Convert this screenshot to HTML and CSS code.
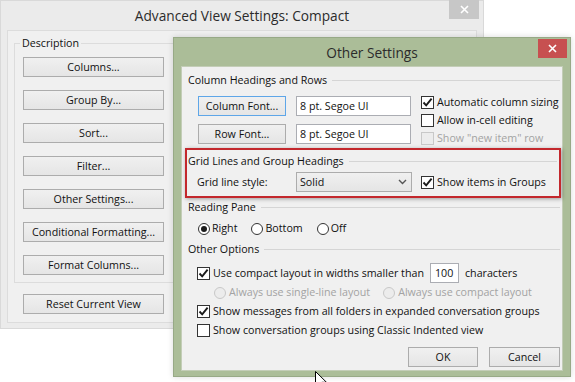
FILE: index.html
```html
<!DOCTYPE html>
<html lang="en">
<head>
    <meta charset="UTF-8">
    <meta name="viewport" content="width=device-width, initial-scale=1.0">
    <title>Advanced View Settings: Compact</title>
    <link rel="stylesheet" href="styles.css">
</head>
<body>
<div class="desktop">
    <!-- back window -->
    <div class="back-window">
        <div class="titlebar">
            <span></span>
            <span class="title">Advanced View Settings: Compact</span>
            <span class="close close-grey">
                <svg width="9" height="9" viewBox="0 0 9 9"><path d="M1 1L8 8M8 1L1 8" stroke="#fff" stroke-width="1.6"/></svg>
            </span>
        </div>
        <div class="client">
            <fieldset class="description">
                <legend>Description</legend>
                <button class="btn wide">Columns...</button>
                <button class="btn wide">Group By...</button>
                <button class="btn wide">Sort...</button>
                <button class="btn wide">Filter...</button>
                <button class="btn wide">Other Settings...</button>
                <button class="btn wide">Conditional Formatting...</button>
                <button class="btn wide">Format Columns...</button>
            </fieldset>
            <button class="btn wide reset">Reset Current View</button>
        </div>
    </div>

    <!-- Other Settings dialog -->
    <div class="dialog">
        <div class="titlebar dialog-titlebar">
            <span></span>
            <span class="title">Other Settings</span>
            <span class="close close-red">
                <svg width="9" height="9" viewBox="0 0 9 9"><path d="M1 1L8 8M8 1L1 8" stroke="#fff" stroke-width="1.6"/></svg>
            </span>
        </div>
        <div class="dialog-body">
            <div class="section-head">Column Headings and Rows</div>
            <div class="fonts-row">
                <div class="font-grid">
                    <button class="btn default">Column Font...</button>
                    <input class="field" type="text" value="8 pt. Segoe UI">
                    <button class="btn">Row Font...</button>
                    <input class="field" type="text" value="8 pt. Segoe UI">
                </div>
                <div class="check-list">
                    <label class="opt"><span class="box"><svg width="11" height="11" viewBox="0 0 11 11"><path d="M1.5 5.5L4.2 8.3L9.6 1.6" fill="none" stroke="#1a1a1a" stroke-width="1.9"/></svg></span>Automatic column sizing</label>
                    <label class="opt"><span class="box"></span>Allow in-cell editing</label>
                    <label class="opt disabled"><span class="box"></span>Show "new item" row</label>
                </div>
            </div>

            <div class="highlight">
                <div class="section-head">Grid Lines and Group Headings</div>
                <div class="grid-row">
                    <span class="grid-label">Grid line style:</span>
                    <div class="dropdown">
                        <span>Solid</span>
                        <svg width="9" height="6" viewBox="0 0 9 6"><path d="M1 1L4.5 4.5L8 1" fill="none" stroke="#555" stroke-width="1.4"/></svg>
                    </div>
                    <label class="opt"><span class="box"><svg width="11" height="11" viewBox="0 0 11 11"><path d="M1.5 5.5L4.2 8.3L9.6 1.6" fill="none" stroke="#1a1a1a" stroke-width="1.9"/></svg></span>Show items in Groups</label>
                </div>
            </div>

            <div class="section-head reading">Reading Pane</div>
            <div class="radio-row">
                <label class="opt"><span class="radio on"></span>Right</label>
                <label class="opt"><span class="radio"></span>Bottom</label>
                <label class="opt"><span class="radio"></span>Off</label>
            </div>

            <div class="section-head other">Other Options</div>
            <div class="options">
                <div class="opt-line tall">
                    <label class="opt"><span class="box"><svg width="11" height="11" viewBox="0 0 11 11"><path d="M1.5 5.5L4.2 8.3L9.6 1.6" fill="none" stroke="#1a1a1a" stroke-width="1.9"/></svg></span>Use compact layout in widths smaller than</label>
                    <input class="field chars" type="text" value="100">
                    <span class="unit">characters</span>
                </div>
                <div class="opt-line sub disabled">
                    <label class="opt"><span class="radio"></span>Always use single-line layout</label>
                    <label class="opt"><span class="radio"></span>Always use compact layout</label>
                </div>
                <div class="opt-line">
                    <label class="opt"><span class="box"><svg width="11" height="11" viewBox="0 0 11 11"><path d="M1.5 5.5L4.2 8.3L9.6 1.6" fill="none" stroke="#1a1a1a" stroke-width="1.9"/></svg></span>Show messages from all folders in expanded conversation groups</label>
                </div>
                <div class="opt-line">
                    <label class="opt"><span class="box"></span>Show conversation groups using Classic Indented view</label>
                </div>
            </div>

            <div class="actions">
                <button class="btn action">OK</button>
                <button class="btn action">Cancel</button>
            </div>
        </div>
    </div>

    <svg class="cursor" width="13" height="19" viewBox="0 0 13 19">
        <path d="M0.5 0.5V16L4.5 12.2L7.2 18L9.5 17L6.8 11.3H11.5Z" fill="#fff" stroke="#000"/>
    </svg>
</div>
</body>
</html>
```

FILE: styles.css
```css
/* base */
body {
    margin: 0;
    background: #fff;
    font-family: "Open Sans", "Segoe UI", sans-serif;
    font-size: 10.7px;
    line-height: 15px;
    color: #111;
}

.desktop {
    position: relative;
    width: 575px;
    height: 382px;
    overflow: hidden;
}

/* window chrome */
.titlebar {
    display: grid;
    grid-template-columns: 1fr auto 1fr;
    align-items: center;
    height: 29px;
}

.title {
    font-size: 13.7px;
    color: #2b2b2b;
    white-space: nowrap;
}

.close {
    justify-self: end;
    align-self: start;
    display: flex;
    align-items: center;
    justify-content: center;
}

.close-grey {
    width: 30px;
    height: 19px;
    margin: -1px 4px 0 0;
    background: #c7c7c7;
}

.close-red {
    width: 29px;
    height: 19px;
    margin: 1px 3px 0 0;
    background: #c75050;
}

/* back window */
.back-window {
    width: 484px;
    height: 329px;
    box-sizing: border-box;
    border: 1px solid #d9d9d9;
    background: #ebebeb;
}

.client {
    margin: 0 6px;
    height: 293px;
    box-sizing: border-box;
    border: 1px solid #dcdcdc;
    background: #f0f0f0;
}

.description {
    display: flex;
    flex-direction: column;
    gap: 13px;
    margin: 5px 6px 0 6px;
    padding: 6px 8px 7px;
    border: 1px solid #dcdcdc;
}

.description legend {
    margin-left: -3px;
    padding: 0 2px;
}

/* buttons */
.btn {
    font: inherit;
    color: #111;
    height: 20px;
    padding: 0;
    box-sizing: border-box;
    border: 1px solid #acacac;
    background: linear-gradient(#f0f0f0, #e5e5e5);
}

.btn.default {
    border-color: #5ea6e8;
}

.wide {
    width: 141px;
}

.reset {
    margin: 11px 0 0 15px;
}

/* Other Settings dialog */
.dialog {
    position: absolute;
    left: 173px;
    top: 37px;
    width: 398px;
    height: 340px;
    box-sizing: border-box;
    border: 1px solid #97a986;
    background: #abbd98;
    box-shadow: 0 0 6px rgba(0, 0, 0, 0.15);
}

.dialog-titlebar {
    height: 28px;
}

.dialog-body {
    margin: 0 7px;
    height: 305px;
    box-sizing: border-box;
    border: 1px solid #c3cdb7;
    background: #f0f0f0;
    padding: 6px 2px 0 6px;
}

.section-head {
    display: flex;
    align-items: center;
    white-space: nowrap;
}

.section-head::after {
    content: "";
    flex: 1;
    margin-left: 5px;
    border-top: 1px solid #d5d5d5;
}

.fonts-row {
    display: flex;
    margin-top: 8px;
    padding-left: 10px;
}

.font-grid {
    display: grid;
    grid-template-columns: 88px 115px;
    grid-auto-rows: 20px;
    column-gap: 10px;
    row-gap: 8px;
}

.field {
    font: inherit;
    color: #111;
    height: 20px;
    box-sizing: border-box;
    border: 1px solid #abadb3;
    background: #fff;
    padding: 0 0 0 3px;
    margin: 0;
}

.check-list {
    margin: -3px 0 0 10px;
}

/* check boxes and radios */
.opt {
    display: flex;
    align-items: center;
    gap: 3px;
    height: 18px;
    white-space: nowrap;
}

.box {
    width: 13px;
    height: 13px;
    box-sizing: border-box;
    border: 1px solid #333;
    background: #fff;
    display: flex;
    align-items: center;
    justify-content: center;
    flex-shrink: 0;
}

.radio {
    width: 12px;
    height: 12px;
    box-sizing: border-box;
    border: 1px solid #333;
    border-radius: 50%;
    background: #fff;
    display: flex;
    align-items: center;
    justify-content: center;
    flex-shrink: 0;
}

.radio.on::after {
    content: "";
    width: 6px;
    height: 6px;
    border-radius: 50%;
    background: #1a1a1a;
}

.disabled {
    color: #a3a3a3;
}

.disabled .box,
.disabled .radio {
    border-color: #c8c8c8;
    background: #ececec;
}

/* red highlight round the grid lines section */
.highlight {
    margin: 1px -1px 0 -3px;
    padding: 4px 2px 4px 1px;
    border: 2px solid #c3282d;
    box-shadow: 1px 1px 4px rgba(0, 0, 0, 0.35);
}

.grid-row {
    display: flex;
    align-items: center;
    height: 20px;
    margin-top: 3px;
    padding-left: 9px;
}

.grid-label {
    width: 99px;
}

.dropdown {
    width: 116px;
    height: 20px;
    box-sizing: border-box;
    display: flex;
    align-items: center;
    justify-content: space-between;
    padding: 0 4px 0 3px;
    border: 1px solid #acacac;
    background: linear-gradient(#f0f0f0, #e5e5e5);
    margin-right: 9px;
}

.reading {
    margin-top: 2px;
}

.radio-row {
    display: flex;
    gap: 14px;
    margin-top: 5px;
    padding-left: 10px;
}

.radio-row .opt {
    gap: 2px;
    height: 17px;
}

.other {
    margin-top: 5px;
}

.options {
    margin-top: 6px;
    padding-left: 9px;
}

.opt-line {
    display: flex;
    align-items: center;
    height: 19px;
}

.opt-line.tall {
    height: 20px;
}

.chars {
    width: 29px;
    padding-left: 4px;
    margin-left: 6px;
}

.unit {
    margin-left: 6px;
}

.sub {
    padding-left: 17px;
    gap: 13px;
}

.actions {
    display: flex;
    justify-content: flex-end;
    gap: 11px;
    margin-top: 7px;
}

.action {
    width: 70px;
}

.action + .action {
    width: 71px;
}

.cursor {
    position: absolute;
    left: 315px;
    top: 371px;
}
```
